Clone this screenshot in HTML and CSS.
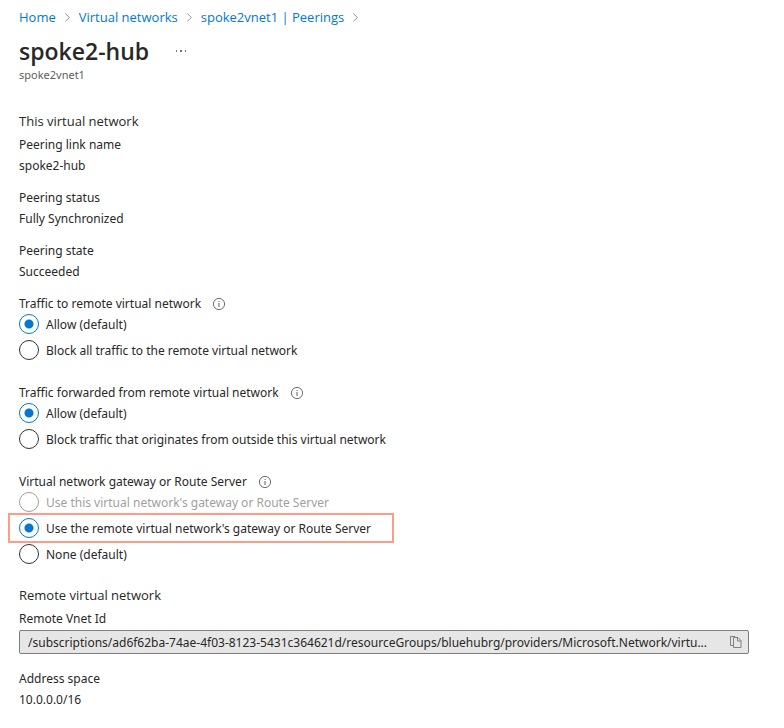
FILE: index.html
```html
<!DOCTYPE html>
<html lang="en">
<head>
<meta charset="utf-8">
<meta name="viewport" content="width=device-width, initial-scale=1">
<title>spoke2-hub</title>
<link rel="stylesheet" href="styles.css">
</head>
<body>
<svg class="symbols" aria-hidden="true">
  <symbol id="chevron" viewBox="0 0 8 12"><path d="M1.5 1.5 6.2 6 1.5 10.5" fill="none" stroke="currentColor"/></symbol>
  <symbol id="info" viewBox="0 0 14 14"><circle cx="7" cy="7" r="5.6" fill="none" stroke="currentColor" stroke-width=".9"/><path d="M7 6v4M7 4v1" fill="none" stroke="currentColor"/></symbol>
  <symbol id="copy" viewBox="0 0 12 14"><path d="M3.500 10.500h-3v-9h4.500l1 1M3.500 2.500h4.500l3 3v7h-7.500zM7.500 2.500v3.500h3.500" fill="none" stroke="currentColor" stroke-width=".9"/></symbol>
</svg>
<nav class="breadcrumb" aria-label="Breadcrumb">
  <a href="#">Home</a><svg class="chevron"><use href="#chevron"/></svg>
  <a href="#">Virtual networks</a><svg class="chevron"><use href="#chevron"/></svg>
  <a href="#">spoke2vnet1 | Peerings</a><svg class="chevron"><use href="#chevron"/></svg>
</nav>
<main>
  <header class="page-header">
    <div class="title-row">
      <h1>spoke2-hub</h1>
      <button class="more" type="button" aria-label="More actions"><svg viewBox="0 0 12 2"><path d="M1 0h1v2H1zM5 0h2v2H5zM10 0h1v2h-1z" fill="currentColor"/></svg></button>
    </div>
    <p class="subtitle">spoke2vnet1</p>
  </header>

  <section>
    <h2>This virtual network</h2>
    <dl class="details">
      <div><dt>Peering link name</dt><dd>spoke2-hub</dd></div>
      <div><dt>Peering status</dt><dd>Fully Synchronized</dd></div>
      <div><dt>Peering state</dt><dd>Succeeded</dd></div>
    </dl>

    <div class="groups">
      <div class="group" role="radiogroup" aria-labelledby="to-remote">
        <div class="group-title"><span id="to-remote">Traffic to remote virtual network</span><svg class="info"><use href="#info"/></svg></div>
        <label class="option"><input type="radio" name="to" checked><span>Allow (default)</span></label>
        <label class="option"><input type="radio" name="to"><span>Block all traffic to the remote virtual network</span></label>
      </div>
      <div class="group" role="radiogroup" aria-labelledby="forwarded">
        <div class="group-title"><span id="forwarded">Traffic forwarded from remote virtual network</span><svg class="info"><use href="#info"/></svg></div>
        <label class="option"><input type="radio" name="forwarded" checked><span>Allow (default)</span></label>
        <label class="option"><input type="radio" name="forwarded"><span>Block traffic that originates from outside this virtual network</span></label>
      </div>
      <div class="group" role="radiogroup" aria-labelledby="gateway">
        <div class="group-title"><span id="gateway">Virtual network gateway or Route Server</span><svg class="info"><use href="#info"/></svg></div>
        <label class="option disabled"><input type="radio" name="gateway" disabled><span>Use this virtual network's gateway or Route Server</span></label>
        <label class="option highlighted"><input type="radio" name="gateway" checked><span>Use the remote virtual network's gateway or Route Server</span></label>
        <label class="option"><input type="radio" name="gateway"><span>None (default)</span></label>
      </div>
    </div>
  </section>

  <section class="remote">
    <h2>Remote virtual network</h2>
    <label class="field-label" for="vnet-id">Remote Vnet Id</label>
    <div class="copy-field">
      <input id="vnet-id" type="text" readonly value="/subscriptions/ad6f62ba-74ae-4f03-8123-5431c364621d/resourceGroups/bluehubrg/providers/Microsoft.Network/virtu...">
      <button type="button" aria-label="Copy"><svg><use href="#copy"/></svg></button>
    </div>
    <dl class="details">
      <div><dt>Address space</dt><dd>10.0.0.0/16</dd></div>
    </dl>
  </section>
</main>
</body>
</html>
```

FILE: styles.css
```css
* {
  box-sizing: border-box;
}

body {
  margin: 0;
  padding: 7px 35px 18px 19px;
  background: #fff;
  color: #292827;
  font: 12px/21px "Noto Sans", "Open Sans", sans-serif;
}

h1, h2, p, dl, dd {
  margin: 0;
}

.symbols {
  position: absolute;
  width: 0;
  height: 0;
}

.breadcrumb {
  display: flex;
  align-items: center;
  gap: 8px;
  font-family: "Open Sans", sans-serif;
  font-size: 13px;
}

.breadcrumb a {
  color: #0078d4;
  text-decoration: none;
}

.chevron {
  width: 7px;
  height: 11px;
  color: #8a8886;
}

.title-row {
  display: flex;
  align-items: center;
  gap: 26px;
  height: 32px;
  margin-top: 7px;
}

h1 {
  font-family: "Open Sans", sans-serif;
  font-size: 23px;
  font-weight: 700;
  font-weight: 600;
  line-height: 32px;
}

button {
  padding: 0;
  border: 0;
  background: none;
  color: #797775;
}

.more svg {
  display: block;
  width: 12px;
  height: 2px;
}

.subtitle {
  color: #605e5c;
  font-size: 11px;
  line-height: 16px;
}

h2 {
  margin-bottom: 2px;
  font-family: "Open Sans", sans-serif;
  font-size: 13px;
  font-weight: 400;
  line-height: 21px;
}

section {
  margin-top: 28px;
}

.details,
.groups {
  display: grid;
}

.details {
  gap: 11px;
}

.groups {
  gap: 22px;
  margin-top: 11px;
}

.group {
  display: grid;
}

.group-title {
  display: flex;
  align-items: center;
  gap: 11px;
}

.info {
  width: 14px;
  height: 14px;
  color: #605e5c;
}

.option {
  display: flex;
  align-items: center;
  gap: 7px;
  width: fit-content;
  height: 20px;
}

.option + .option {
  margin-top: 6px;
}

.option input {
  flex: none;
  appearance: none;
  width: 20px;
  height: 20px;
  margin: 0;
  border: 1px solid #323130;
  border-radius: 50%;
}

.option input:checked {
  border-color: #0078d4;
  background: radial-gradient(circle, #0078d4 4px, transparent 5px);
}

.option input:disabled {
  border-color: #a19f9d;
}

.disabled {
  color: #a19f9d;
}

.highlighted {
  position: relative;
}

.highlighted::after {
  content: "";
  position: absolute;
  inset: -5px -23px -5px -11px;
  border: 2px solid #ff9b86;
  pointer-events: none;
}

.remote {
  margin-top: 21px;
}

.field-label {
  display: block;
}

.copy-field {
  display: flex;
  align-items: center;
  height: 24px;
  margin: 1px 0 14px;
  padding: 0 6px 0 8px;
  border: 1px solid #7f7e7d;
  border-radius: 2px;
  background: #e6e6e6;
}

.copy-field input {
  flex: 1;
  min-width: 0;
  padding: 0;
  border: 0;
  outline: 0;
  background: none;
  color: inherit;
  font: inherit;
  text-overflow: ellipsis;
}

.copy-field svg {
  display: block;
  width: 12px;
  height: 14px;
}
```
